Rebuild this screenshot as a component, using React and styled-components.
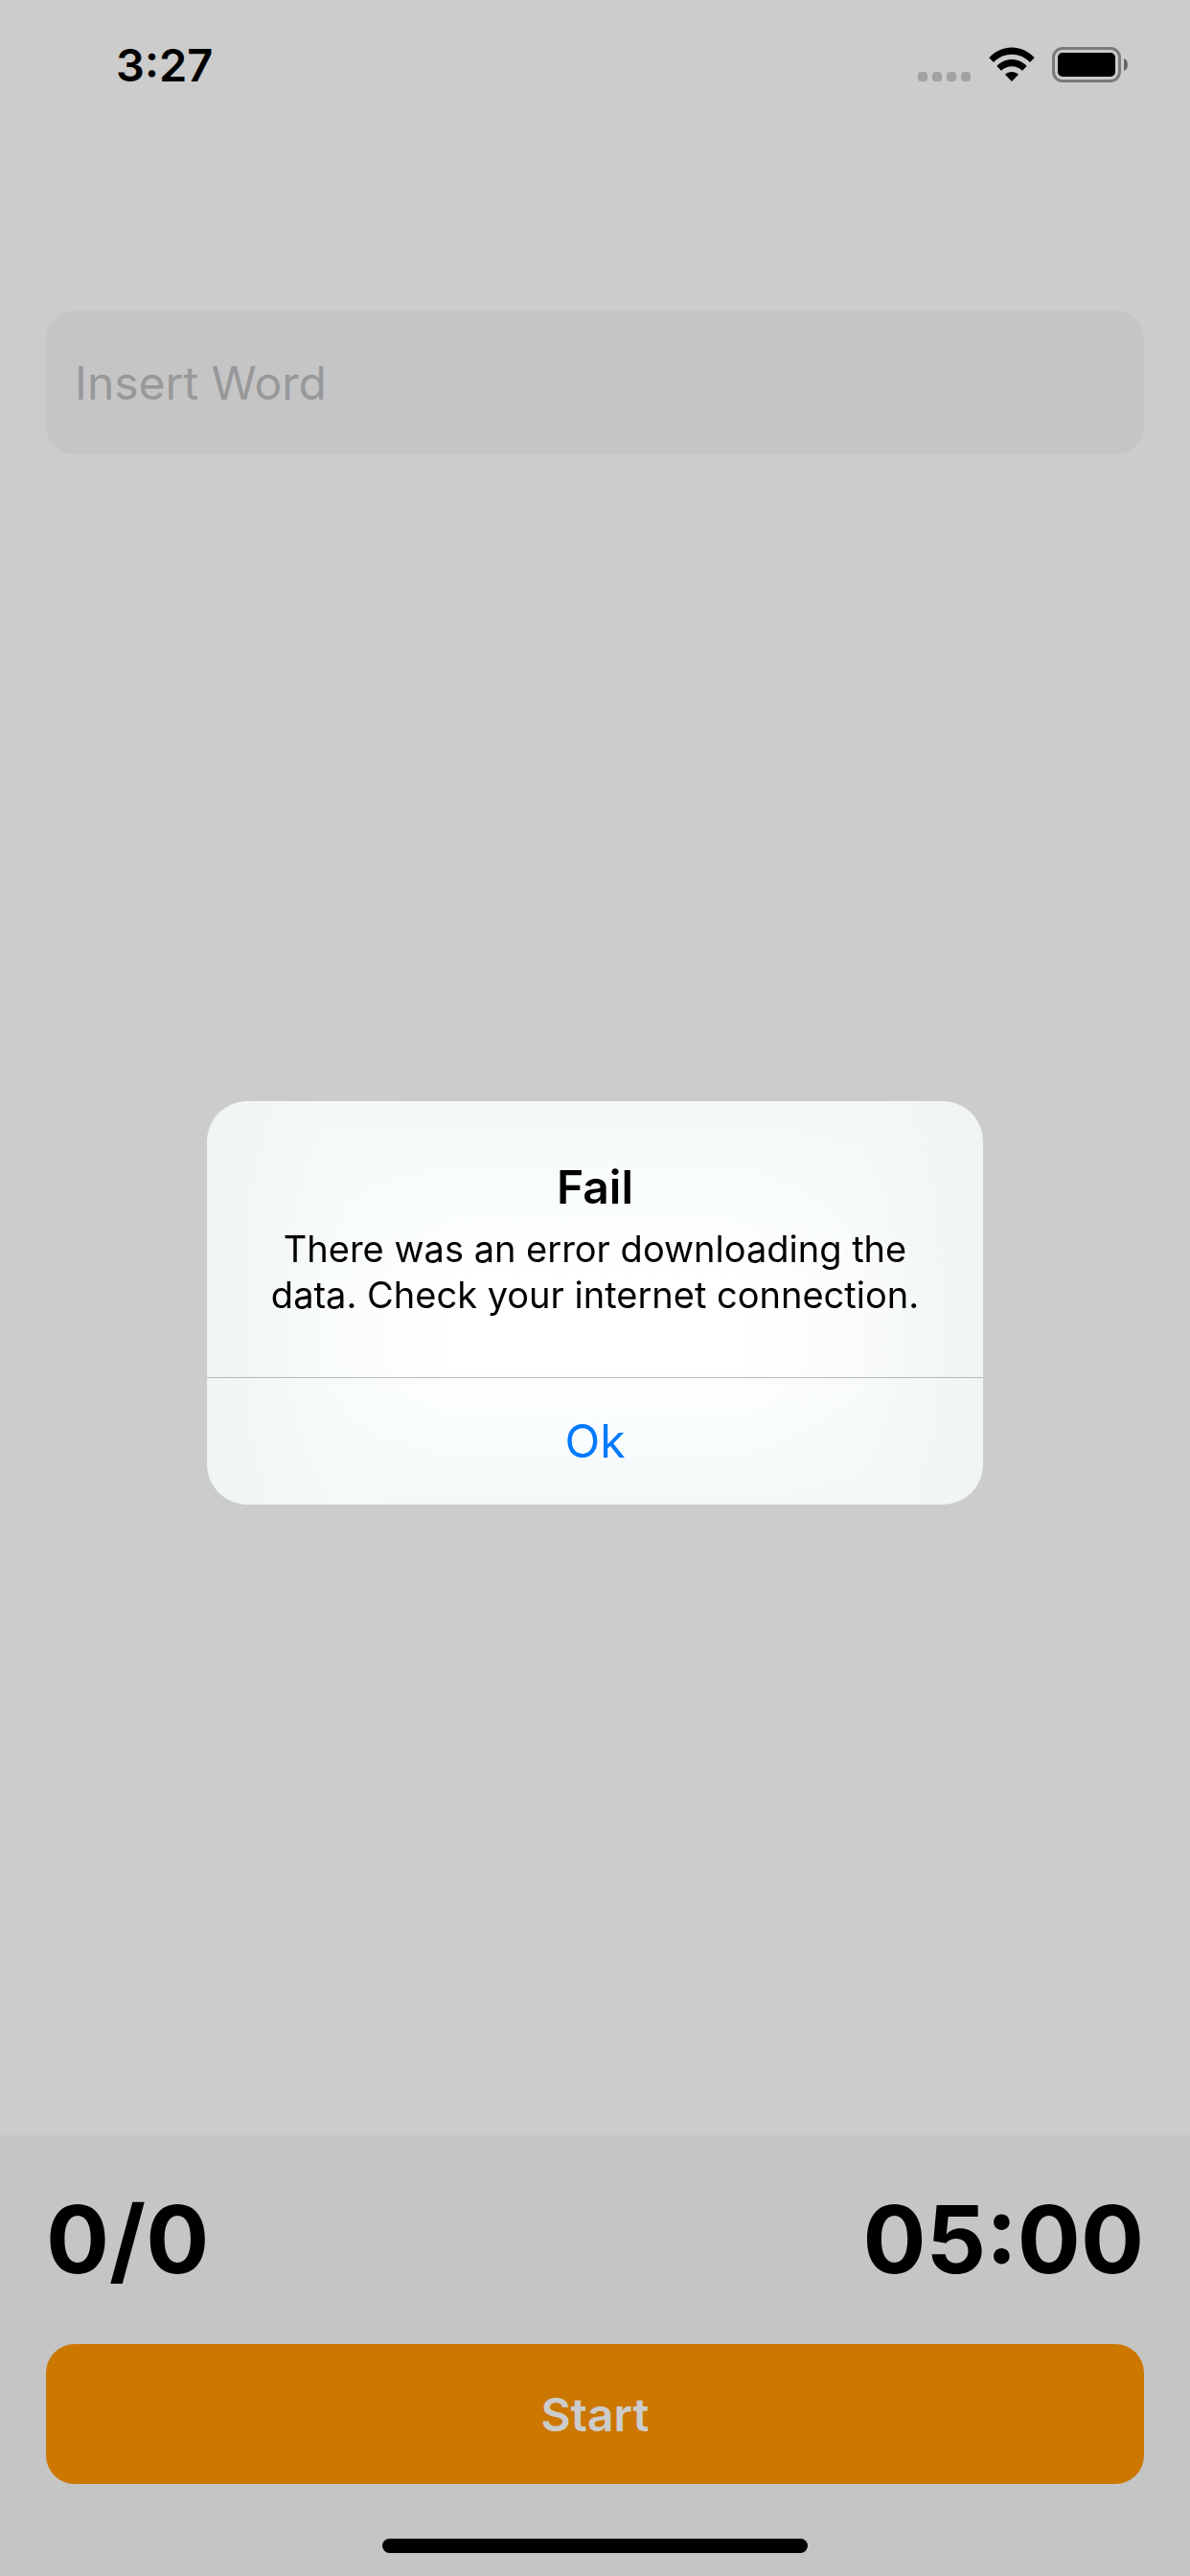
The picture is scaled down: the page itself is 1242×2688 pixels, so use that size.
import React, { useState } from "react";
import styled, { createGlobalStyle } from "styled-components";

const GlobalStyle = createGlobalStyle`
  *, *::before, *::after { box-sizing: border-box; }
  body {
    margin: 0;
    background: #ffffff;
    color: #000000;
    font-family: Inter, "Liberation Sans", sans-serif;
    -webkit-font-smoothing: antialiased;
  }
  button, input { font: inherit; border: 0; margin: 0; }
`;

const Screen = styled.div`
  display: flex;
  flex-direction: column;
  min-height: 100vh;
`;

const StatusBar = styled.header`
  display: flex;
  align-items: center;
  justify-content: space-between;
  height: 132px;
  padding: 3px 64px 0 121px;
`;

const Clock = styled.time`
  font-size: 47px;
  line-height: 61px;
  font-weight: 600;
`;

const StatusIcons = styled.div`
  display: flex;
  align-items: flex-end;
  gap: 18px;
`;

const Main = styled.main`
  flex: 1;
  padding: 192px 48px 48px;
`;

const WordInput = styled.input`
  display: block;
  width: 100%;
  height: 150px;
  padding: 0 30px;
  border-radius: 30px;
  background: #f7f7f7;
  color: #000000;
  font-size: 48px;
  outline: none;
  &::placeholder { color: #bfbfc1; opacity: 1; }
`;

const Footer = styled.footer`
  display: flex;
  flex-direction: column;
  padding: 48px 48px 24px;
  background: #f7f7f7;
`;

const Scores = styled.div`
  display: flex;
  justify-content: space-between;
  margin-bottom: 48px;
`;

const Figure = styled.span`
  font-size: 98px;
  line-height: 122px;
  font-weight: 700;
`;

const StartButton = styled.button`
  height: 146px;
  border-radius: 30px;
  background: #ff9500;
  color: #ffffff;
  font-size: 48px;
  font-weight: 600;
`;

const HomeIndicator = styled.div`
  align-self: center;
  width: 444px;
  height: 15px;
  margin-top: 57px;
  border-radius: 8px;
  background: #000000;
`;

const Scrim = styled.div`
  position: fixed;
  inset: 0;
  display: flex;
  align-items: center;
  justify-content: center;
  padding: 132px 48px 102px;
  background: rgba(0, 0, 0, 0.2);
`;

const Alert = styled.section`
  width: 810px;
  overflow: hidden;
  border-radius: 42px;
  background:
    linear-gradient(90deg, #eff4f5 0%, rgba(245, 249, 250, 0.6) 16%, rgba(255, 255, 255, 0) 32%,
      rgba(255, 255, 255, 0) 68%, rgba(245, 248, 249, 0.6) 84%, #f0f4f5 100%),
    linear-gradient(180deg, #f3f7f8 0%, #fafdfd 24%, #ffffff 45%, #ffffff 65%, #fafdfe 80%, #f4f8f9 100%);
`;

const AlertText = styled.div`
  padding: 58px 48px 62px;
  text-align: center;
`;

const AlertTitle = styled.h1`
  margin: 0 0 9px;
  font-size: 48px;
  line-height: 63px;
  font-weight: 600;
`;

const AlertMessage = styled.p`
  margin: 0;
  font-size: 38px;
  line-height: 48px;
`;

const AlertButton = styled.button`
  display: block;
  width: 100%;
  height: 133px;
  border-top: 1px solid #b4b9ba;
  background: transparent;
  color: #007aff;
  font-size: 48px;
`;

function SignalIcon() {
  return (
    <svg width="56" height="11" viewBox="0 0 56 11" fill="#cbcbcb" aria-hidden="true">
      {[0, 15, 30, 45].map((x) => (
        <rect key={x} x={x} width="10" height="10" rx="3.5" />
      ))}
    </svg>
  );
}

function WifiIcon() {
  return (
    <svg width="48" height="37" viewBox="0 0 48 37" aria-hidden="true">
      <path d="M0.3 11.2 C13.5 -3.2 34.5 -3.2 47.7 11.2 L43 16 C32.5 5 15.5 5 5 16 Z" />
      <path d="M8.3 20 C17 10.7 31 10.7 39.7 20 L35 24.8 C29 18.7 19 18.7 13 24.8 Z" />
      <path d="M17 28.7 C20.8 25.1 27.2 25.1 31 28.7 L24 36 Z" />
    </svg>
  );
}

function BatteryIcon() {
  return (
    <svg width="80" height="37" viewBox="0 0 80 37" aria-hidden="true">
      <rect x="1.5" y="1.5" width="69" height="34" rx="9.5" fill="none" stroke="#999999" strokeWidth="3" />
      <rect x="6" y="6" width="60" height="25" rx="5" />
      <path d="M75 12 C80.3 14 80.3 23 75 25 Z" fill="#808080" />
    </svg>
  );
}

export default function App() {
  const [alertOpen, setAlertOpen] = useState(true);

  return (
    <>
      <GlobalStyle />
      <Screen>
        <StatusBar>
          <Clock>3:27</Clock>
          <StatusIcons>
            <SignalIcon />
            <WifiIcon />
            <BatteryIcon />
          </StatusIcons>
        </StatusBar>
        <Main>
          <WordInput type="text" placeholder="Insert Word" aria-label="Insert Word" />
        </Main>
        <Footer>
          <Scores>
            <Figure>0/0</Figure>
            <Figure>05:00</Figure>
          </Scores>
          <StartButton type="button">Start</StartButton>
          <HomeIndicator />
        </Footer>
      </Screen>
      {alertOpen && (
        <Scrim>
          <Alert role="alertdialog" aria-labelledby="alert-title" aria-describedby="alert-message">
            <AlertText>
              <AlertTitle id="alert-title">Fail</AlertTitle>
              <AlertMessage id="alert-message">
                There was an error downloading the data. Check your internet connection.
              </AlertMessage>
            </AlertText>
            <AlertButton type="button" onClick={() => setAlertOpen(false)}>
              Ok
            </AlertButton>
          </Alert>
        </Scrim>
      )}
    </>
  );
}
